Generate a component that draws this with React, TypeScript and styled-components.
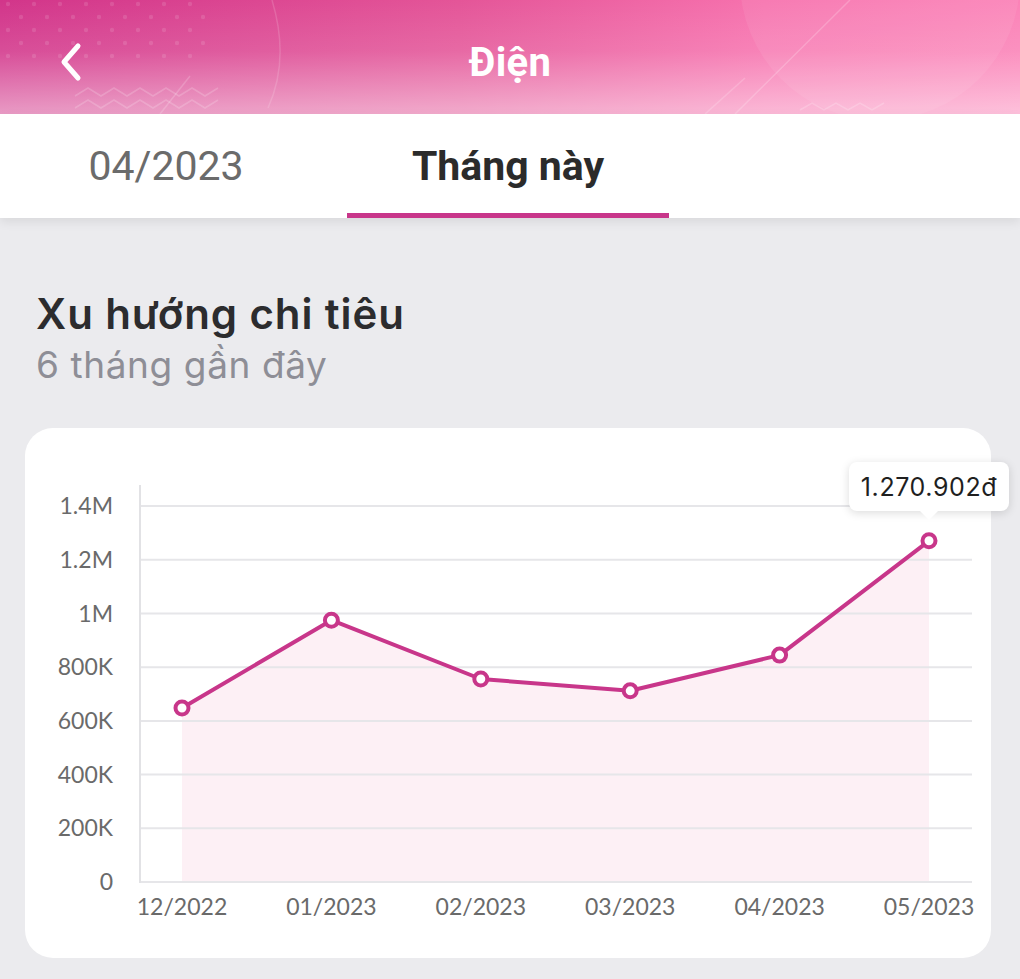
import React from "react";
import styled, { createGlobalStyle } from "styled-components";

const GlobalStyle = createGlobalStyle`
  html, body { margin: 0; padding: 0; background: #ebebee; }
  body { font-family: Roboto, "Noto Sans", sans-serif; -webkit-font-smoothing: antialiased; }
  * { box-sizing: border-box; }
`;

const Page = styled.div`
  width: 1020px;
  min-height: 979px;
  background: #ebebee;
  display: flex;
  flex-direction: column;
`;

const Header = styled.header`
  position: relative;
  height: 114px;
  padding-top: 10px;
  overflow: hidden;
  display: grid;
  grid-template-columns: 120px 1fr 120px;
  align-items: center;
  background:
    linear-gradient(180deg, rgba(255,255,255,0) 0%, rgba(255,255,255,0.12) 45%, rgba(255,255,255,0.5) 100%),
    linear-gradient(90deg, #d2358a 0%, #e45598 45%, #f772ae 75%, #fb82b7 100%);
`;

const Decor = styled.svg`
  position: absolute;
  inset: 0;
  pointer-events: none;
`;

const BackButton = styled.button`
  position: relative;
  z-index: 1;
  border: none;
  background: transparent;
  padding: 0 0 0 56px;
  height: 60px;
  display: flex;
  align-items: center;
  cursor: pointer;
`;

const HeaderTitle = styled.h1`
  position: relative;
  z-index: 1;
  margin: 0;
  text-align: center;
  color: #ffffff;
  font-family: Roboto, "Noto Sans", sans-serif;
  font-weight: 700;
  font-size: 40px;
  letter-spacing: 0.3px;
`;

const TabBar = styled.nav`
  position: relative;
  z-index: 2;
  height: 104px;
  background: #ffffff;
  display: flex;
  box-shadow: 0 4px 10px rgba(0, 0, 0, 0.08);
`;

const Tab = styled.div<{ $active?: boolean }>`
  position: relative;
  width: 340px;
  display: flex;
  align-items: center;
  justify-content: center;
  font-family: Roboto, "Noto Sans", sans-serif;
  font-size: 41px;
  font-weight: ${(p) => (p.$active ? 700 : 400)};
  color: ${(p) => (p.$active ? "#2b2b2b" : "#6b6b6b")};
  padding: ${(p) => (p.$active ? "0 4px 0 0" : "0 8px 0 0")};
  &::after {
    content: "";
    display: ${(p) => (p.$active ? "block" : "none")};
    position: absolute;
    left: 7px;
    right: 11px;
    bottom: 0;
    height: 5px;
    background: #c8368a;
  }
`;

const Content = styled.main`
  padding: 70px 29px 0 25px;
  display: flex;
  flex-direction: column;
`;

const SectionTitle = styled.h2`
  margin: 0 0 0 11px;
  font-family: Inter, "Noto Sans", sans-serif;
  font-weight: 600;
  font-size: 42px;
  letter-spacing: 0.9px;
  line-height: 52px;
  color: #2c2c2e;
`;

const SectionSub = styled.div`
  margin: 0 0 0 11px;
  font-family: Inter, "Noto Sans", sans-serif;
  font-weight: 400;
  font-size: 37px;
  letter-spacing: 0.6px;
  line-height: 50px;
  color: #8e8e96;
`;

const Card = styled.section`
  position: relative;
  margin-top: 38px;
  width: 966px;
  height: 530px;
  background: #ffffff;
  border-radius: 28px;
`;

const ChartSvg = styled.svg`
  display: block;
  font-family: Lato, "Open Sans", sans-serif;
`;

const Tooltip = styled.div`
  position: absolute;
  top: 34px;
  width: 160px;
  height: 49px;
  background: #ffffff;
  border-radius: 8px;
  box-shadow: 0 2px 10px rgba(0, 0, 0, 0.14);
  display: flex;
  align-items: center;
  justify-content: center;
  font-family: Inter, "Noto Sans", sans-serif;
  font-size: 25px;
  color: #1f1f1f;
  letter-spacing: 0.6px;
  &::after {
    content: "";
    position: absolute;
    left: 50%;
    bottom: -9px;
    margin-left: -10px;
    border-left: 10px solid transparent;
    border-right: 10px solid transparent;
    border-top: 10px solid #ffffff;
  }
`;

const months = ["12/2022", "01/2023", "02/2023", "03/2023", "04/2023", "05/2023"];
const values = [648000, 975000, 756000, 712000, 845000, 1270902];
const ticks = [0, 200000, 400000, 600000, 800000, 1000000, 1200000, 1400000];
const tickLabel = (v: number) =>
  v === 0 ? "0" : v >= 1000000 ? `${v / 1000000}M` : `${v / 1000}K`;

const AXIS_X = 115;
const BASE_Y = 454;
const STEP = 53.7;
const X0 = 157;
const XSTEP = 149.4;
const RIGHT = 947;

const yOf = (v: number) => BASE_Y - (v / 200000) * STEP;
const xOf = (i: number) => X0 + i * XSTEP;

function Chart() {
  const pts = values.map((v, i) => [xOf(i), yOf(v)] as const);
  const line = pts.map(([x, y], i) => `${i ? "L" : "M"}${x.toFixed(1)} ${y.toFixed(1)}`).join(" ");
  const area = `${line} L${xOf(5)} ${BASE_Y} L${xOf(0)} ${BASE_Y} Z`;
  return (
    <ChartSvg width={966} height={530} viewBox="0 0 966 530">
      <path d={area} fill="#fdf0f5" />
      {ticks.map((t) => (
        <g key={t}>
          <line x1={AXIS_X} x2={RIGHT} y1={yOf(t)} y2={yOf(t)} stroke="#e6e6e9" strokeWidth={2} />
          <text x={88} y={yOf(t) + 8} textAnchor="end" fontSize={23} fill="#6a6a6a">
            {tickLabel(t)}
          </text>
        </g>
      ))}
      <line x1={AXIS_X} x2={AXIS_X} y1={57} y2={BASE_Y + 1} stroke="#e2e2e5" strokeWidth={2} />
      {months.map((m, i) => (
        <text key={m} x={xOf(i)} y={487} textAnchor="middle" fontSize={23} fill="#6a6a6a">
          {m}
        </text>
      ))}
      <path d={line} fill="none" stroke="#c8368a" strokeWidth={4} strokeLinejoin="round" />
      {pts.map(([x, y], i) => (
        <circle key={i} cx={x} cy={y} r={6.5} fill="#ffffff" stroke="#c8368a" strokeWidth={4} />
      ))}
    </ChartSvg>
  );
}

export default function App() {
  const tipLeft = xOf(5) - 80;
  return (
    <Page>
      <GlobalStyle />
      <Header>
        <Decor width="1020" height="114" viewBox="0 0 1020 114">
          <circle cx="880" cy="-20" r="140" fill="rgba(255,255,255,0.07)" />
          {Array.from({ length: 5 }).map((_, r) =>
            Array.from({ length: 8 }).map((__, c) => (
              <circle
                key={`${r}-${c}`}
                cx={8 + c * 26 + (r % 2) * 13}
                cy={4 + r * 13}
                r={2.2}
                fill="rgba(255,255,255,0.12)"
              />
            ))
          )}
          <polyline
            points="75,96 88,88 101,96 114,88 127,96 140,88 153,96 166,88 179,96 192,88 205,96 218,88"
            fill="none"
            stroke="rgba(255,255,255,0.18)"
            strokeWidth="1.5"
          />
          <polyline
            points="75,108 88,100 101,108 114,100 127,108 140,100 153,108 166,100 179,108 192,100 205,108 218,100"
            fill="none"
            stroke="rgba(255,255,255,0.18)"
            strokeWidth="1.5"
          />
          <line x1="160" y1="114" x2="190" y2="76" stroke="rgba(255,255,255,0.18)" strokeWidth="1.5" />
          <path d="M268 108 Q 290 60 272 0" fill="none" stroke="rgba(255,255,255,0.15)" strokeWidth="1.5" />
          <line x1="705" y1="114" x2="745" y2="78" stroke="rgba(255,255,255,0.18)" strokeWidth="1.5" />
          <line x1="735" y1="114" x2="850" y2="0" stroke="rgba(255,255,255,0.2)" strokeWidth="1.5" />
          <polyline
            points="800,110 812,103 824,110 836,103 848,110 860,103 872,110 884,103"
            fill="none"
            stroke="rgba(255,255,255,0.2)"
            strokeWidth="1.5"
          />
        </Decor>
        <BackButton aria-label="Quay lại">
          <svg width="30" height="40" viewBox="0 0 30 40">
            <polyline
              points="22,4 8,20 22,36"
              fill="none"
              stroke="#ffffff"
              strokeWidth="5"
              strokeLinecap="round"
              strokeLinejoin="round"
            />
          </svg>
        </BackButton>
        <HeaderTitle>Điện</HeaderTitle>
        <div />
      </Header>
      <TabBar>
        <Tab>04/2023</Tab>
        <Tab $active>Tháng này</Tab>
      </TabBar>
      <Content>
        <SectionTitle>Xu hướng chi tiêu</SectionTitle>
        <SectionSub>6 tháng gần đây</SectionSub>
        <Card>
          <Chart />
          <Tooltip style={{ left: tipLeft }}>1.270.902đ</Tooltip>
        </Card>
      </Content>
    </Page>
  );
}
